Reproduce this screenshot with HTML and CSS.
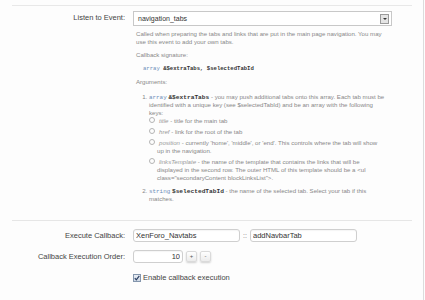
FILE: index.html
```html
<!DOCTYPE html>
<html lang="en">
<head>
  <meta charset="UTF-8" />
  <title>Code Event Listener</title>
  <link rel="stylesheet" href="styles.css">
</head>
<body>

<div class="page">
  <form class="form">
    <div class="prev-row"></div>

    <dl class="ctrl first">
      <dt>Listen to Event:</dt>
      <dd>
        <div class="select">
          <span>navigation_tabs</span>
          <span class="select-arrow"></span>
        </div>
        <div class="explain">
          <p>Called when preparing the tabs and links that are put in the main page navigation. You may use this event to add your own tabs.</p>
          <p class="sig-title">Callback signature:</p>
          <pre class="sig"><span class="type">array</span> <b>&amp;$extraTabs</b>, <b>$selectedTabId</b></pre>
          <p class="args-title">Arguments:</p>
          <ol class="args">
            <li>
              <span class="type">array</span> <b class="var">&amp;$extraTabs</b> - you may push additional tabs onto this array. Each tab must be identified with a unique key (see $selectedTabId) and be an array with the following keys:
              <ul>
                <li><i>title</i> - title for the main tab</li>
                <li><i>href</i> - link for the root of the tab</li>
                <li><i>position</i> - currently 'home', 'middle', or 'end'. This controls where the tab will show up in the navigation.</li>
                <li><i>linksTemplate</i> - the name of the template that contains the links that will be displayed in the second row. The outer HTML of this template should be a &lt;ul class="secondaryContent blockLinksList"&gt;.</li>
              </ul>
            </li>
            <li><span class="type">string</span> <b class="var">$selectedTabId</b> - the name of the selected tab. Select your tab if this matches.</li>
          </ol>
        </div>
      </dd>
    </dl>

    <div class="separator"></div>

    <dl class="ctrl">
      <dt>Execute Callback:</dt>
      <dd class="callback">
        <input class="text cb-class" type="text" value="XenForo_Navtabs">
        <span class="colons">::</span>
        <input class="text cb-method" type="text" value="addNavbarTab">
      </dd>
    </dl>

    <dl class="ctrl">
      <dt>Callback Execution Order:</dt>
      <dd class="spin">
        <input class="text number" type="text" value="10">
        <button type="button" class="spin-btn">+</button>
        <button type="button" class="spin-btn">-</button>
      </dd>
    </dl>

    <dl class="ctrl">
      <dt></dt>
      <dd>
        <label class="check">
          <span class="box">
            <svg width="6" height="6" viewBox="0 0 6 6"><path d="M0.8 3.2 L2.3 4.8 L5.3 0.9" fill="none" stroke="#2b3f63" stroke-width="1.2"/></svg>
          </span>
          Enable callback execution
        </label>
      </dd>
    </dl>
  </form>
</div>

</body>
</html>
```

FILE: styles.css
```css
* { box-sizing: border-box; margin: 0; padding: 0; }
body { background-color: #fdfdfd; font-family: 'Liberation Sans', Arial, sans-serif; color: #444; }
.page { width: 424px; height: 300px; border-right: 1px solid #dcdcdc; }
.form { margin: 0 11px 0 12px; }
.prev-row { height: 6px; border-bottom: 1px solid #e8e8e8; }

.ctrl { display: grid; grid-template-columns: 113px 1fr; column-gap: 8px; margin-top: 8px; }
.ctrl.first { margin-top: 5px; }
.ctrl dt { text-align: right; font-size: 7.5px; line-height: 13px; color: #444; }
.ctrl dd { font-size: 7.5px; }

.select { width: 259px; height: 15px; border: 1px solid #c8c8c8; background: #fff; display: flex; align-items: center; justify-content: space-between; padding: 0 2px 0 4px; font-size: 7px; color: #333; }
.select-arrow { width: 9px; height: 10px; border: 1px solid #9a9a9a; background: #e4e4e4; position: relative; }
.select-arrow::after { content: ""; position: absolute; left: 2px; top: 3px; border-left: 2px solid transparent; border-right: 2px solid transparent; border-top: 2px solid #333; }

.explain { width: 250px; margin: 4px 0 0 3px; font-size: 6.1px; line-height: 8px; color: #888; }
.explain p { margin-bottom: 5px; }
.sig-title { margin-bottom: 6px !important; }
.sig { font-family: 'Liberation Mono', 'Courier New', monospace; font-size: 5.6px; line-height: 8px; padding-left: 7px; margin-bottom: 5px; color: #333; }
.type, .var { font-family: 'Liberation Mono', 'Courier New', monospace; line-height: 1; }
.type { color: #6b8cb8; }
.sig b, .var { color: #333; }
.args-title { margin-bottom: 7px !important; }
.args { padding-left: 13px; }
.args > li { margin-bottom: 5px; }
.args .type { font-size: 5.9px; }
.args .var { font-size: 6.2px; }
.args ul { list-style: none; padding: 0 8px 0 8px; margin-top: 0; }
.args ul li { margin-bottom: 3px; }
.args ul li::before { content: ""; display: inline-block; width: 4px; height: 4px; border: 1px solid #b4b4b4; border-radius: 50%; margin: 0 4px 0 -8px; vertical-align: 0; }
.args ul li i { font-style: italic; color: #999; line-height: 1; }

.separator { height: 1px; background: #e6e6e6; margin-top: 12px; }

.text { height: 13px; border: 1px solid #cfcfcf; border-radius: 3px; background: #fff; font-family: 'Liberation Sans', Arial, sans-serif; font-size: 7.5px; color: #333; padding: 0 2px; box-shadow: inset 0 1px 1px rgba(0,0,0,0.04); outline: none; }
.callback { display: flex; align-items: center; }
.cb-class { width: 107px; }
.cb-method { width: 107px; }
.colons { width: 10px; text-align: center; font-size: 7px; color: #777; }

.spin { display: flex; align-items: center; gap: 3px; }
.number { width: 50px; text-align: right; }
.spin-btn { width: 11px; height: 11px; border: 1px solid #dadada; border-radius: 2px; background: linear-gradient(#ffffff, #ececec); box-shadow: 0 1px 2px rgba(0,0,0,0.18); font-family: 'Liberation Sans', Arial, sans-serif; font-size: 6px; color: #555; line-height: 9px; }

.check { display: flex; align-items: center; gap: 2px; margin-top: 2px; font-size: 7.5px; color: #444; }
.box { width: 8px; height: 8px; border: 1px solid #8496ad; background: linear-gradient(#e9eef4, #cfd9e5); display: flex; align-items: center; justify-content: center; }
```
